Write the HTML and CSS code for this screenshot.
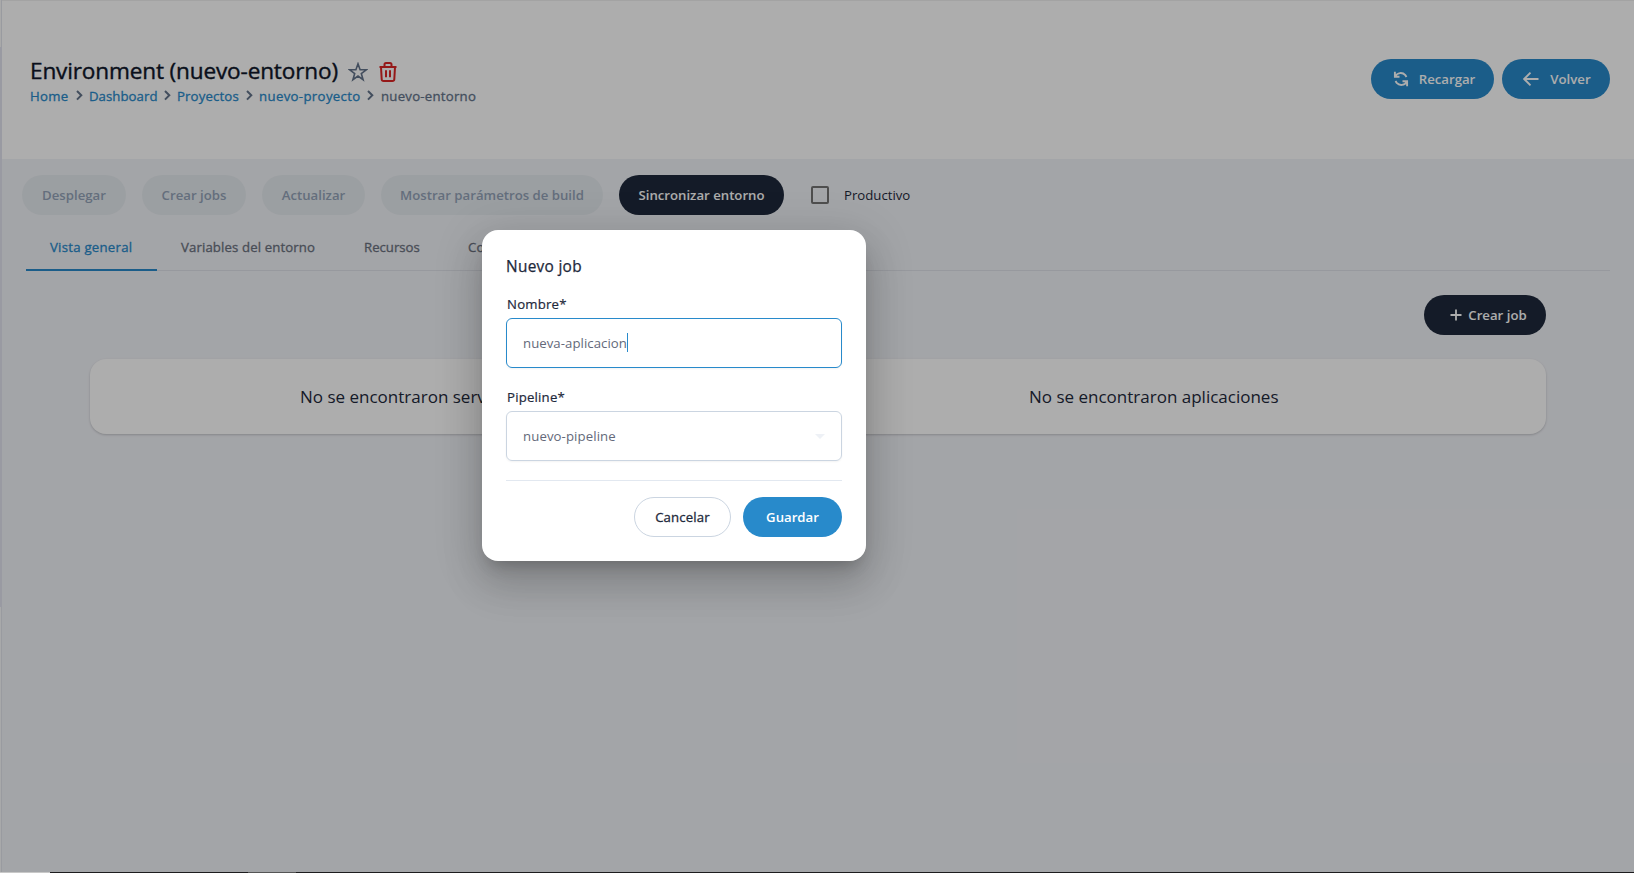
FILE: index.html
```html
<!DOCTYPE html>
<html lang="es">
<head>
<meta charset="utf-8">
<title>Environment (nuevo-entorno)</title>
<link rel="stylesheet" href="styles.css">
</head>
<body>
<div class="app">
  <aside class="rail"><div class="rail-top"></div><div class="rail-thumb"></div><div class="rail-rest"></div></aside>
  <main class="page">
    <header class="header">
      <div class="heading">
        <div class="title-row">
          <h1 class="title">Environment (nuevo-entorno)</h1>
          <svg class="star" viewBox="0 0 20 20"><path d="M10 1.8l2.1 6h6.2l-5 3.8 1.8 6.1-5.1-3.6-5.1 3.6 1.8-6.1-5-3.8h6.2z" fill="none" stroke="#64748b" stroke-width="1.6"/></svg>
          <svg class="trash" viewBox="0 0 18 20"><path d="M.5 5h17M5.500 5V2.500q0-1.500 1.500-1.500h4q1.500 0 1.500 1.500V5M2 5l.7 12.200q.1 1.800 1.900 1.800h8.800q1.800 0 1.900-1.800L16 5M7 8.200v7M11 8.200v7" fill="none" stroke="#dc2626" stroke-width="2"/></svg>
        </div>
        <nav class="crumbs">
          <a class="crumb c-home">Home</a><svg class="chev" viewBox="0 0 7 11"><path d="M1 1l4.3 4.3L1 9.6"/></svg>
          <a class="crumb c-dash">Dashboard</a><svg class="chev" viewBox="0 0 7 11"><path d="M1 1l4.3 4.3L1 9.6"/></svg>
          <a class="crumb c-proj">Proyectos</a><svg class="chev" viewBox="0 0 7 11"><path d="M1 1l4.3 4.3L1 9.6"/></svg>
          <a class="crumb c-new">nuevo-proyecto</a><svg class="chev" viewBox="0 0 7 11"><path d="M1 1l4.3 4.3L1 9.6"/></svg>
          <span class="crumb current">nuevo-entorno</span>
        </nav>
      </div>
      <div class="header-actions">
        <button class="btn primary reload"><svg class="reload-icon" viewBox="0 0 16 16"><path d="M1.900.8v4.900h4.600M2.300 5.300C4.300 1.500 9.400.9 12.300 4.200L13.500 6M14.100 15.200v-4.900H9.500M13.700 10.700C11.700 14.500 6.600 15.100 3.700 11.800L2.500 10"/></svg>Recargar</button>
        <button class="btn primary back"><svg class="back-icon" viewBox="0 0 16 14"><path d="M15.500 7H1.200M7.500 .7L1.200 7l6.300 6.300"/></svg>Volver</button>
      </div>
    </header>
    <section class="body">
      <div class="toolbar">
        <button class="btn disabled w104">Desplegar</button>
        <button class="btn disabled w104">Crear jobs</button>
        <button class="btn disabled w103">Actualizar</button>
        <button class="btn disabled w222">Mostrar parámetros de build</button>
        <button class="btn dark w165">Sincronizar entorno</button>
        <label class="check"><span class="box"></span>Productivo</label>
      </div>
      <div class="tabs">
        <div class="tab active">Vista general</div>
        <div class="tab vars">Variables del entorno</div>
        <div class="tab res">Recursos</div>
        <div class="tab">Configuración</div>
      </div>
      <div class="create-row">
        <button class="btn dark create"><svg class="plus" viewBox="0 0 12 12"><path d="M6 .5v11M.5 6h11"/></svg>Crear job</button>
      </div>
      <div class="card">
        <p class="empty services">No se encontraron servicios</p>
        <p class="empty">No se encontraron aplicaciones</p>
      </div>
    </section>
  </main>
</div>
<div class="overlay">
  <div class="modal">
    <h2 class="modal-title">Nuevo job</h2>
    <div class="label">Nombre*</div>
    <div class="field focused"><span>nueva-aplicacion</span><i class="caret"></i></div>
    <div class="label second">Pipeline*</div>
    <div class="field"><span>nuevo-pipeline</span><i class="arrow"></i></div>
    <div class="modal-actions">
      <button class="btn outline">Cancelar</button>
      <button class="btn primary save">Guardar</button>
    </div>
  </div>
</div>
<div class="edge"><div class="edge-light"></div><div class="edge-dark"></div><div class="edge-mid"></div><div class="edge-rest"></div></div>
</body>
</html>
```

FILE: styles.css
```css
* { box-sizing: border-box; }
body { margin: 0; height: 873px; overflow: hidden; font-family: "Open Sans", "Noto Sans", sans-serif; font-size: 13.2px; color: #1e293b; }
h1, h2, p { margin: 0; font-weight: 400; }
svg { display: block; flex: none; fill: none; }
.app { display: flex; height: 873px; }
.rail { width: 2px; display: flex; flex-direction: column; }
.rail-top { height: 47px; background: #fafafa; border-right: 1px solid #e2e5ec; }
.rail-thumb { height: 560px; background: #e2e4ef; }
.rail-rest { flex: 1; background: #f8f9fb; border-right: 1px solid #e2e5ec; }
.page { flex: 1; display: flex; flex-direction: column; }
.header { height: 159px; background: #fff; display: flex; justify-content: space-between; padding: 57px 24px 0 28px; box-shadow: inset 0 1px #f0f0f0; }
.title-row { display: flex; height: 27px; align-items: center; }
.title { width: 318px; font-size: 22.6px; line-height: 27px; letter-spacing: -.16px; white-space: nowrap; color: #0f172a; -webkit-text-stroke: .4px #0f172a; }
.star { width: 20px; height: 20px; margin-top: 2px; }
.trash { width: 18px; height: 20px; margin: 2px 0 0 11px; }
.crumbs { display: flex; align-items: center; height: 22px; margin-top: 1px; }
.crumb { -webkit-text-stroke: .3px currentColor; color: #288acb; white-space: nowrap; letter-spacing: .15px; }
.c-home { width: 46px; letter-spacing: .3px; }
.c-dash { width: 75px; letter-spacing: .05px; }
.c-proj { width: 69px; }
.c-new { width: 108px; letter-spacing: .35px; }
.chev { width: 7px; height: 11px; margin: -1px 6px 0 0; stroke: #64748b; stroke-width: 2; }
.current { color: #64748b; letter-spacing: .25px; margin-left: 1px; }
.header-actions { display: flex; gap: 8px; padding-top: 2px; }
.btn { height: 40px; border: 0; border-radius: 20px; padding: 0; display: flex; align-items: center; justify-content: center; font-family: inherit; font-size: 13.2px; font-weight: 600; white-space: nowrap; flex: none; }
.primary { background: #288acb; color: #fff; }
.dark { background: #1e293b; color: #fff; }
.reload { width: 123px; padding-left: 3px; }
.back { width: 108px; padding-left: 2px; }
.reload-icon { width: 16px; height: 16px; margin-right: 10px; stroke: #fff; stroke-width: 1.9; }
.back-icon { width: 16px; height: 14px; margin-right: 11px; stroke: #fff; stroke-width: 1.9; }
.body { flex: 1; background: #f1f3f8; padding: 16px 24px 0 20px; }
.toolbar { display: flex; gap: 16px; align-items: center; }
.disabled { background: #e5ebef; color: #94a3b8; }
.w104 { width: 104px; }
.w103 { width: 103px; }
.w222 { width: 222px; }
.w165 { width: 165px; }
.check { display: flex; align-items: center; margin-left: 11px; gap: 15px; }
.box { width: 18px; height: 18px; border: 2px solid #747474; border-radius: 2px; }
.tabs { display: flex; height: 56px; margin-left: 4px; box-shadow: inset 0 -1px #dfe2e9; }
.tab { width: 131px; height: 56px; padding: 22px 0 0 24px; line-height: 20px; -webkit-text-stroke: .3px currentColor; letter-spacing: .12px; color: #6b7280; white-space: nowrap; }
.active { color: #288acb; border-bottom: 2px solid #288acb; letter-spacing: .25px; }
.vars { width: 183px; }
.res { width: 104px; letter-spacing: 0; }
.create-row { display: flex; justify-content: flex-end; padding: 24px 64px 24px 0; }
.create { width: 122px; padding-left: 7px; }
.plus { width: 12px; height: 12px; margin-right: 6px; stroke: #fff; stroke-width: 1.8; }
.card { height: 75px; margin: 0 64px 0 68px; border-radius: 16px; background: #fff; box-shadow: 0 1px 3px #0000001a, 0 1px 2px #00000018; display: flex; align-items: center; padding-left: 210px; }
.empty { font-size: 17px; white-space: nowrap; padding-bottom: 1px; }
.services { width: 729px; }
.overlay { position: absolute; inset: 0; background: rgba(0,0,0,.32); }
.modal { position: absolute; left: 482px; top: 230px; width: 384px; height: 331px; border-radius: 16px; padding: 24px; background: #fff; box-shadow: 0 11px 15px -7px #0003, 0 24px 38px 3px #00000020, 0 9px 46px 8px #0000001c; }
.modal-title { font-size: 15.4px; -webkit-text-stroke: .25px currentColor; letter-spacing: .3px; line-height: 24px; height: 24px; padding-top: 1px; }
.label { margin: 16px 0 0 1px; -webkit-text-stroke: .2px currentColor; letter-spacing: .2px; height: 24px; line-height: 20px; }
.second { margin-top: 19px; }
.field { height: 50px; border: 1px solid #cbd5e1; border-radius: 6px; box-shadow: 0 1px 2px #0000000d; padding: 0 16px; display: flex; align-items: center; color: #64697a; letter-spacing: .1px; }
.focused { border-color: #288acb; letter-spacing: .05px; }
.caret { width: 1px; height: 19px; margin-top: -1px; background: #288acb; }
.arrow { margin-left: auto; border: 5px solid transparent; border-top-color: #eef1f6; border-bottom: 0; }
.modal-actions { display: flex; justify-content: flex-end; gap: 12px; border-top: 1px solid #e2e8f0; margin-top: 19px; padding-top: 16px; }
.outline { width: 97px; background: #fff; border: 1px solid #cbd5e1; color: #1e293b; font-weight: 400; -webkit-text-stroke: .3px currentColor; letter-spacing: .15px; }
.save { width: 99px; }
.edge { position: absolute; left: 0; right: 0; bottom: 0; height: 1px; display: flex; }
.edge-light { width: 50px; background: #c8c8c8; }
.edge-dark { width: 198px; background: #1c1c1e; }
.edge-mid { width: 48px; background: #555; }
.edge-rest { flex: 1; background: #1c1c1e; }
```
